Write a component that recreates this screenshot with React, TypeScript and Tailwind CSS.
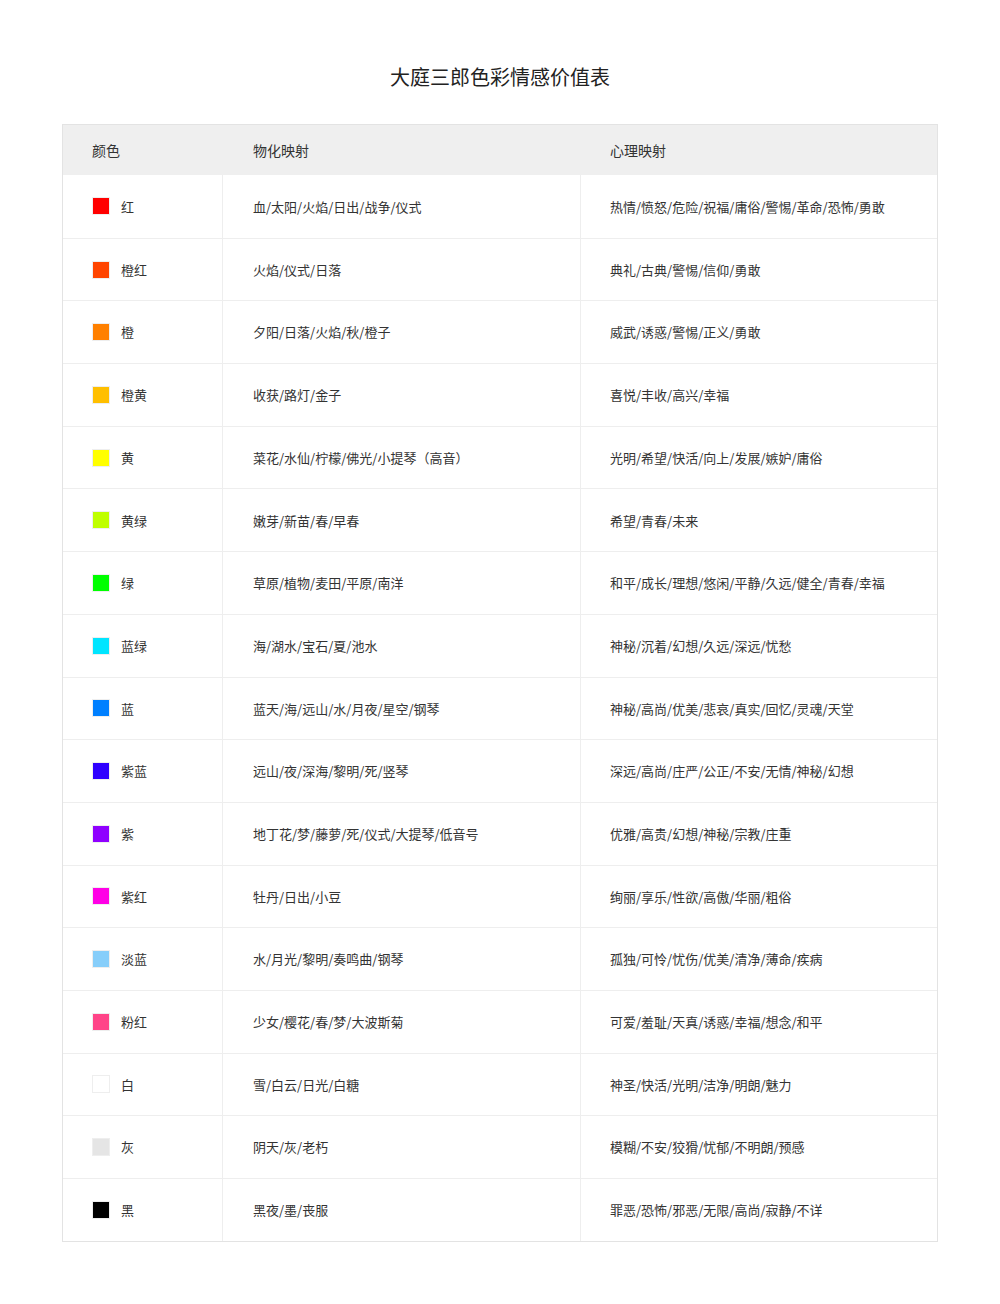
const rows: [string, string, string, string][] = [
  ["#ff0000", "红", "血/太阳/火焰/日出/战争/仪式", "热情/愤怒/危险/祝福/庸俗/警惕/革命/恐怖/勇敢"],
  ["#ff4500", "橙红", "火焰/仪式/日落", "典礼/古典/警惕/信仰/勇敢"],
  ["#ff8000", "橙", "夕阳/日落/火焰/秋/橙子", "威武/诱惑/警惕/正义/勇敢"],
  ["#ffbf00", "橙黄", "收获/路灯/金子", "喜悦/丰收/高兴/幸福"],
  ["#ffff00", "黄", "菜花/水仙/柠檬/佛光/小提琴（高音）", "光明/希望/快活/向上/发展/嫉妒/庸俗"],
  ["#bfff00", "黄绿", "嫩芽/新苗/春/早春", "希望/青春/未来"],
  ["#00ff00", "绿", "草原/植物/麦田/平原/南洋", "和平/成长/理想/悠闲/平静/久远/健全/青春/幸福"],
  ["#00e5ff", "蓝绿", "海/湖水/宝石/夏/池水", "神秘/沉着/幻想/久远/深远/忧愁"],
  ["#0080ff", "蓝", "蓝天/海/远山/水/月夜/星空/钢琴", "神秘/高尚/优美/悲哀/真实/回忆/灵魂/天堂"],
  ["#2f00ff", "紫蓝", "远山/夜/深海/黎明/死/竖琴", "深远/高尚/庄严/公正/不安/无情/神秘/幻想"],
  ["#8f00ff", "紫", "地丁花/梦/藤萝/死/仪式/大提琴/低音号", "优雅/高贵/幻想/神秘/宗教/庄重"],
  ["#ff00e6", "紫红", "牡丹/日出/小豆", "绚丽/享乐/性欲/高傲/华丽/粗俗"],
  ["#87cefa", "淡蓝", "水/月光/黎明/奏鸣曲/钢琴", "孤独/可怜/忧伤/优美/清净/薄命/疾病"],
  ["#ff4488", "粉红", "少女/樱花/春/梦/大波斯菊", "可爱/羞耻/天真/诱惑/幸福/想念/和平"],
  ["#ffffff", "白", "雪/白云/日光/白糖", "神圣/快活/光明/洁净/明朗/魅力"],
  ["#e5e5e5", "灰", "阴天/灰/老朽", "模糊/不安/狡猾/忧郁/不明朗/预感"],
  ["#000000", "黑", "黑夜/墨/丧服", "罪恶/恐怖/邪恶/无限/高尚/寂静/不详"],
];

export default function App() {
  return (
    <div
      className="w-[1000px] min-h-[1304px] bg-white pt-[62px] px-[62px] text-[#333]"
      style={{ fontFamily: '"Noto Sans CJK SC", "Noto Sans", sans-serif' }}
    >
      <h1 className="text-center text-[20px] leading-[30px] text-[#222] mb-[32px]">
        大庭三郎色彩情感价值表
      </h1>
      <div className="border border-[#e3e3e3]">
        <div className="grid grid-cols-[160px_358px_1fr] h-[50px] bg-[#efefef] text-[14px] text-[#333] items-center">
          <div className="pl-[29px]">颜色</div>
          <div className="pl-[30px]">物化映射</div>
          <div className="pl-[29px]">心理映射</div>
        </div>
        {rows.map(([c, name, a, b], i) => (
          <div
            key={name}
            className={`grid grid-cols-[160px_358px_1fr] h-[62.7px] text-[13px] items-stretch ${
              i > 0 ? "border-t border-[#eeeeee]" : ""
            }`}
          >
            <div className="flex items-center pl-[29px] gap-[11px] border-r border-[#eeeeee]">
              <span
                className="w-[18px] h-[18px] border border-[#eeeeee]"
                style={{ backgroundColor: c }}
              />
              <span>{name}</span>
            </div>
            <div className="flex items-center pl-[30px] border-r border-[#eeeeee]">{a}</div>
            <div className="flex items-center pl-[29px]">{b}</div>
          </div>
        ))}
      </div>
    </div>
  );
}
